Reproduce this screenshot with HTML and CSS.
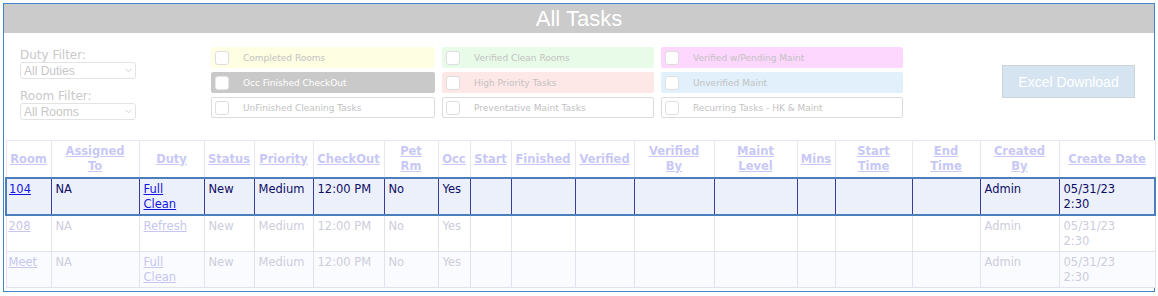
FILE: index.html
```html
<!DOCTYPE html>
<html>
<head>
<meta charset="utf-8">
<title>All Tasks</title>
<link rel="stylesheet" href="styles.css">
</head>
<body>
<div class="frame">
  <div class="title">All Tasks</div>
  <div class="controls">
    <div class="filters">
      <div class="flabel">Duty Filter:</div>
      <div class="select"><span>All Duties</span><svg class="chev" width="7" height="5" viewBox="0 0 7 5"><path d="M0.5 0.8 L3.5 3.8 L6.5 0.8" fill="none" stroke="#cfcfcf" stroke-width="1"/></svg></div>
      <div class="flabel">Room Filter:</div>
      <div class="select"><span>All Rooms</span><svg class="chev" width="7" height="5" viewBox="0 0 7 5"><path d="M0.5 0.8 L3.5 3.8 L6.5 0.8" fill="none" stroke="#cfcfcf" stroke-width="1"/></svg></div>
    </div>
    <div class="legend">
      <div class="lg yellow"><span class="box"></span>Completed Rooms</div>
      <div class="lg green"><span class="box"></span>Verified Clean Rooms</div>
      <div class="lg pink"><span class="box"></span>Verified w/Pending Maint</div>
      <div class="lg grey"><span class="box"></span>Occ Finished CheckOut</div>
      <div class="lg red"><span class="box"></span>High Priority Tasks</div>
      <div class="lg blue"><span class="box"></span>Unverified Maint</div>
      <div class="lg plain"><span class="box"></span>UnFinished Cleaning Tasks</div>
      <div class="lg plain"><span class="box"></span>Preventative Maint Tasks</div>
      <div class="lg plain"><span class="box"></span>Recurring Tasks - HK &amp; Maint</div>
    </div>
    <div class="excel">Excel Download</div>
  </div>
  <table class="tasks">
    <colgroup>
      <col class="w45"><col class="w88"><col class="w65"><col class="w50"><col class="w59"><col class="w71"><col class="w54"><col class="w32"><col class="w41"><col class="w64"><col class="w59"><col class="w80"><col class="w83"><col class="w38"><col class="w77"><col class="w68"><col class="w79"><col class="w96">
    </colgroup>
    <thead>
      <tr>
        <th><a href="#">Room</a></th>
        <th><a href="#">Assigned<br>To</a></th>
        <th><a href="#">Duty</a></th>
        <th><a href="#">Status</a></th>
        <th><a href="#">Priority</a></th>
        <th><a href="#">CheckOut</a></th>
        <th><a href="#">Pet<br>Rm</a></th>
        <th><a href="#">Occ</a></th>
        <th><a href="#">Start</a></th>
        <th><a href="#">Finished</a></th>
        <th><a href="#">Verified</a></th>
        <th><a href="#">Verified<br>By</a></th>
        <th><a href="#">Maint<br>Level</a></th>
        <th><a href="#">Mins</a></th>
        <th><a href="#">Start<br>Time</a></th>
        <th><a href="#">End<br>Time</a></th>
        <th><a href="#">Created<br>By</a></th>
        <th><a href="#">Create Date</a></th>
      </tr>
    </thead>
    <tbody>
      <tr class="sel">
        <td><a href="#">104</a></td><td>NA</td><td><a href="#">Full<br>Clean</a></td><td>New</td><td>Medium</td><td>12:00 PM</td><td>No</td><td>Yes</td><td></td><td></td><td></td><td></td><td></td><td></td><td></td><td></td><td>Admin</td><td>05/31/23<br>2:30</td>
      </tr>
      <tr class="faded">
        <td><a href="#">208</a></td><td>NA</td><td><a href="#">Refresh</a></td><td>New</td><td>Medium</td><td>12:00 PM</td><td>No</td><td>Yes</td><td></td><td></td><td></td><td></td><td></td><td></td><td></td><td></td><td>Admin</td><td>05/31/23<br>2:30</td>
      </tr>
      <tr class="faded alt">
        <td><a href="#">Meet</a></td><td>NA</td><td><a href="#">Full<br>Clean</a></td><td>New</td><td>Medium</td><td>12:00 PM</td><td>No</td><td>Yes</td><td></td><td></td><td></td><td></td><td></td><td></td><td></td><td></td><td>Admin</td><td>05/31/23<br>2:30</td>
      </tr>
    </tbody>
  </table>
</div>
</body>
</html>
```

FILE: styles.css
```css
body {
  margin: 0;
  background: #ffffff;
  font-family: "DejaVu Sans", Verdana, sans-serif;
}

.frame {
  margin: 3px;
  width: 1150px;
  border: 1px solid #3d85c6;
  padding-bottom: 3px;
}

.title {
  background: #cbcbcb;
  height: 29px;
  line-height: 29px;
  text-align: center;
  color: #ffffff;
  font-family: "Liberation Sans", Arial, sans-serif;
  font-size: 22px;
}

.controls {
  display: flex;
  align-items: flex-start;
  height: 107px;
  box-sizing: border-box;
  padding-top: 14px;
}

.filters {
  margin-left: 16px;
  width: 116px;
  padding-top: 2px;
}

.flabel {
  font-size: 12px;
  line-height: 13px;
  color: #c9c9c9;
}

.select {
  height: 17px;
  box-sizing: border-box;
  border: 1px solid #e3e3e3;
  border-radius: 3px;
  display: flex;
  align-items: center;
  justify-content: space-between;
  padding: 0 3px 0 3px;
  font-family: "Liberation Sans", Arial, sans-serif;
  font-size: 12px;
  color: #c6c6c6;
}

.select + .flabel {
  margin-top: 11px;
}

.legend {
  display: grid;
  grid-template-columns: 224px 212px 242px;
  grid-auto-rows: 21px;
  column-gap: 7px;
  row-gap: 4px;
  margin-left: 75px;
}

.lg {
  display: flex;
  align-items: center;
  box-sizing: border-box;
  border: 1px solid transparent;
  border-radius: 2px;
  font-size: 9px;
  color: #c2c2c2;
  white-space: nowrap;
}

.box {
  width: 14px;
  height: 14px;
  box-sizing: border-box;
  border: 1px solid #dedede;
  border-radius: 3px;
  background: #ffffff;
  margin-left: 3px;
  margin-right: 14px;
  flex: none;
}

.yellow { background: #fefee2; border-color: #fefee2; }
.green  { background: #e8fbe8; border-color: #e8fbe8; }
.pink   { background: #fdd7fd; border-color: #fdd7fd; }
.grey   { background: #c9c9c9; border-color: #c9c9c9; color: #ffffff; }
.grey .box { border-color: #e6e6e6; }
.red    { background: #fee7e7; border-color: #fee7e7; }
.blue   { background: #e1f0fb; border-color: #e1f0fb; }
.plain  { background: #ffffff; border-color: #dcdcdc; }

.excel {
  margin-left: auto;
  margin-right: 19px;
  margin-top: 18px;
  width: 133px;
  height: 33px;
  box-sizing: border-box;
  background: #d6e4f1;
  border: 1px solid #cdd3da;
  color: #ffffff;
  font-family: "Liberation Sans", Arial, sans-serif;
  font-size: 14px;
  display: flex;
  align-items: center;
  justify-content: center;
}

.tasks {
  margin-left: 1px;
  width: 1149px;
  border-collapse: collapse;
  table-layout: fixed;
  font-size: 11.5px;
  line-height: 15px;
}

.w45 { width: 45px; }
.w88 { width: 88px; }
.w65 { width: 65px; }
.w50 { width: 50px; }
.w59 { width: 59px; }
.w71 { width: 71px; }
.w54 { width: 54px; }
.w32 { width: 32px; }
.w41 { width: 41px; }
.w64 { width: 64px; }
.w80 { width: 80px; }
.w83 { width: 83px; }
.w38 { width: 38px; }
.w77 { width: 77px; }
.w68 { width: 68px; }
.w79 { width: 79px; }
.w96 { width: 96px; }

.tasks th {
  padding: 3px 1px;
  border: 1px solid #e7e7f1;
  background: #ffffff;
  text-align: center;
  vertical-align: middle;
  white-space: nowrap;
  font-weight: bold;
}

.tasks th a {
  color: #c8c8f6;
  text-decoration: underline;
}

.tasks td {
  padding: 3px 4px 2px;
  vertical-align: top;
  border: 1px solid #e2e2ee;
  white-space: nowrap;
}

.sel td {
  background: #ecf0fa;
  color: #0d0d66;
  border-left: 1px solid #3b3b98;
  border-right: 1px solid #3b3b98;
  border-top: 2px solid #4c7dbd;
  border-bottom: 2px solid #4c7dbd;
}

.sel td:first-child { border-left: 2px solid #4c7dbd; padding-left: 2px; }
.sel td:last-child { border-right: 2px solid #4c7dbd; }

.sel a { color: #1414e6; }

.faded td {
  background: #ffffff;
  color: #cdcddb;
}

.faded.alt td {
  background: #fafbff;
}

.faded a { color: #c6c6ee; }
.faded td:first-child { padding-left: 2px; }
```
